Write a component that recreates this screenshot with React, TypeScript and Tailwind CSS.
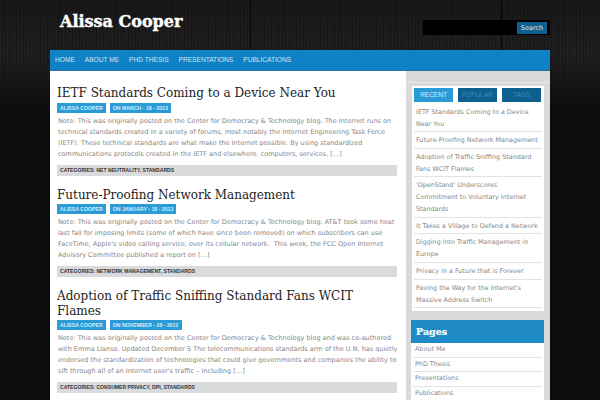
const sans = "font-['DejaVu_Sans',sans-serif]";
const arial = "font-['Liberation_Sans',Arial,sans-serif]";
const serif = "font-['DejaVu_Serif',serif]";

const posts = [
  {
    title: ["IETF Standards Coming to a Device Near You"],
    date: "ON MARCH - 18 - 2013",
    lines: [
      "Note: This was originally posted on the Center for Democracy & Technology blog. The Internet runs on",
      "technical standards created in a variety of forums, most notably the Internet Engineering Task Force",
      "(IETF). These technical standards are what make the Internet possible. By using standardized",
      "communications protocols created in the IETF and elsewhere, computers, services, […]",
    ],
    cats: "NET NEUTRALITY, STANDARDS",
  },
  {
    title: ["Future-Proofing Network Management"],
    date: "ON JANUARY - 18 - 2013",
    lines: [
      "Note: This was originally posted on the Center for Democracy & Technology blog. AT&T took some heat",
      "last fall for imposing limits (some of which have since been removed) on which subscribers can use",
      "FaceTime, Apple's video calling service, over its cellular network.  This week, the FCC Open Internet",
      "Advisory Committee published a report on […]",
    ],
    cats: "NETWORK MANAGEMENT, STANDARDS",
  },
  {
    title: ["Adoption of Traffic Sniffing Standard Fans WCIT", "Flames"],
    date: "ON NOVEMBER - 28 - 2012",
    lines: [
      "Note: This was originally posted on the Center for Democracy & Technology blog and was co-authored",
      "with Emma Llanso. Updated December 5 The telecommunications standards arm of the U.N. has quietly",
      "endorsed the standardization of technologies that could give governments and companies the ability to",
      "sift through all of an Internet user's traffic – including […]",
    ],
    cats: "CONSUMER PRIVACY, DPI, STANDARDS",
  },
];

const recent = [
  ["IETF Standards Coming to a Device", "Near You"],
  ["Future-Proofing Network Management"],
  ["Adoption of Traffic Sniffing Standard", "Fans WCIT Flames"],
  ["'OpenStand' Underscores", "Commitment to Voluntary Internet", "Standards"],
  ["It Takes a Village to Defend a Network"],
  ["Digging into Traffic Management in", "Europe"],
  ["Privacy in a Future that is Forever"],
  ["Paving the Way for the Internet's", "Massive Address Switch"],
];

const nav = ["HOME", "ABOUT ME", "PHD THESIS", "PRESENTATIONS", "PUBLICATIONS"];
const pages = ["About Me", "PhD Thesis", "Presentations", "Publications"];

function Post({ p }: { p: (typeof posts)[number] }) {
  return (
    <article className="mb-[12px]">
      <h2 className={`${serif} text-[12px] leading-[14.5px] text-[#222] font-normal`}>
        {p.title.map((t) => (
          <div key={t} className="whitespace-nowrap">{t}</div>
        ))}
      </h2>
      <div className={`${arial} flex gap-[4px] mt-[2px] text-[5.2px] font-bold leading-[10px] text-[#d6eefa]`}>
        <span className="bg-[#2b9bd8] px-[3px]">ALISSA COOPER</span>
        <span className="bg-[#2b9bd8] px-[3px]">{p.date}</span>
      </div>
      <div className={`${sans} mt-[3px] pl-[1px] text-[6.5px] leading-[11px] text-[#888]`}>
        {p.lines.map((l) => (
          <div key={l} className="whitespace-pre">{l}</div>
        ))}
      </div>
      <div className={`${arial} mt-[5px] h-[11px] bg-[#d8dadb] pl-[3px] text-[5.1px] font-bold leading-[11px] text-[#333]`}>
        CATEGORIES: {p.cats}
      </div>
    </article>
  );
}

export default function App() {
  return (
    <div className="relative h-[400px] w-[600px] overflow-hidden bg-[#0c0c0c]">
      <div className="absolute inset-x-0 top-0 h-[110px] bg-[repeating-linear-gradient(90deg,#1c1c1c_0px,#272727_1px,#161616_2px,#232323_4px,#181818_5px,#202020_7px)]" />
      <div className="absolute inset-x-0 top-0 h-[110px] bg-gradient-to-b from-black/25 via-transparent to-[#0c0c0c]" />
      <div className="absolute left-[250px] top-0 h-[50px] w-px bg-black/70" />
      <div className="absolute left-[501px] top-0 h-[50px] w-px bg-black/80" />

      <div className="relative ml-[50px] w-[500px]">
        <header className="flex h-[50px] items-start justify-between">
          <h1 className={`${serif} ml-[10px] mt-[10px] text-[16px] leading-[24px] font-bold text-white [-webkit-text-stroke:0.4px_white]`}>Alissa Cooper</h1>
          <form className="mt-[20px] flex h-[15px] w-[127px] justify-end bg-black pb-[1px] pr-[3px] pt-[2px]">
            <button className={`${sans} h-[12px] w-[30px] bg-[#0f5f8f] text-[6.5px] leading-[12px] text-[#d9e8f2]`}>Search</button>
          </form>
        </header>

        <nav className={`${arial} flex h-[21px] gap-[10px] border-b border-[#2d6f96] bg-[#0f82c5] pl-[5px] text-[6.6px] leading-[20px] text-[#cfe6f5]`}>
          {nav.map((n) => (
            <span key={n}>{n}</span>
          ))}
        </nav>

        <div className="flex h-[329px] bg-white">
          <main className="w-[355px] shrink-0 overflow-hidden pl-[7px] pr-[8px] pt-[15px]">
            {posts.map((p) => (
              <Post key={p.date} p={p} />
            ))}
          </main>
          <aside className="ml-px w-[144px] shrink-0 bg-[#d8dadb] px-[6px] pt-[11px]">
            <div className="-mx-[6px] mb-[3px] h-px bg-[#e6e7e8]" />
            <section className="bg-white px-[2px] pb-[3px] pt-[1.5px]">
              <div className={`${arial} flex gap-[5px] text-center text-[6.5px] leading-[14px]`}>
                <span className="w-[39px] bg-[#2b9bd8] text-[#d8eef9]">RECENT</span>
                <span className="w-[39px] bg-[#0f5f8f] text-[#3c8bbb]">POPULAR</span>
                <span className="w-[39px] bg-[#0f5f8f] text-[#3c8bbb]">TAGS</span>
              </div>
              <ul className={`${sans} mt-[2px] text-[6.4px] leading-[12px] text-[#888]`}>
                {recent.map((r) => (
                  <li key={r[0]} className="border-b border-[#e2e3e4] px-[2px] pb-[1.6px] pt-[2px]">
                    {r.map((l) => (
                      <div key={l} className="whitespace-nowrap">{l}</div>
                    ))}
                  </li>
                ))}
              </ul>
            </section>
            <section className="-ml-px mt-[9px] bg-white">
              <h3 className={`${serif} h-[23px] bg-[#1f8bc6] pl-[5px] text-[9.5px] leading-[23px] font-bold text-white [-webkit-text-stroke:0.2px_white]`}>Pages</h3>
              <ul className={`${sans} px-[2px] text-[6.4px] leading-[13.5px] text-[#888]`}>
                {pages.map((l) => (
                  <li key={l} className="border-b border-[#e2e3e4] px-[2px]">{l}</li>
                ))}
              </ul>
            </section>
          </aside>
        </div>
      </div>
    </div>
  );
}
